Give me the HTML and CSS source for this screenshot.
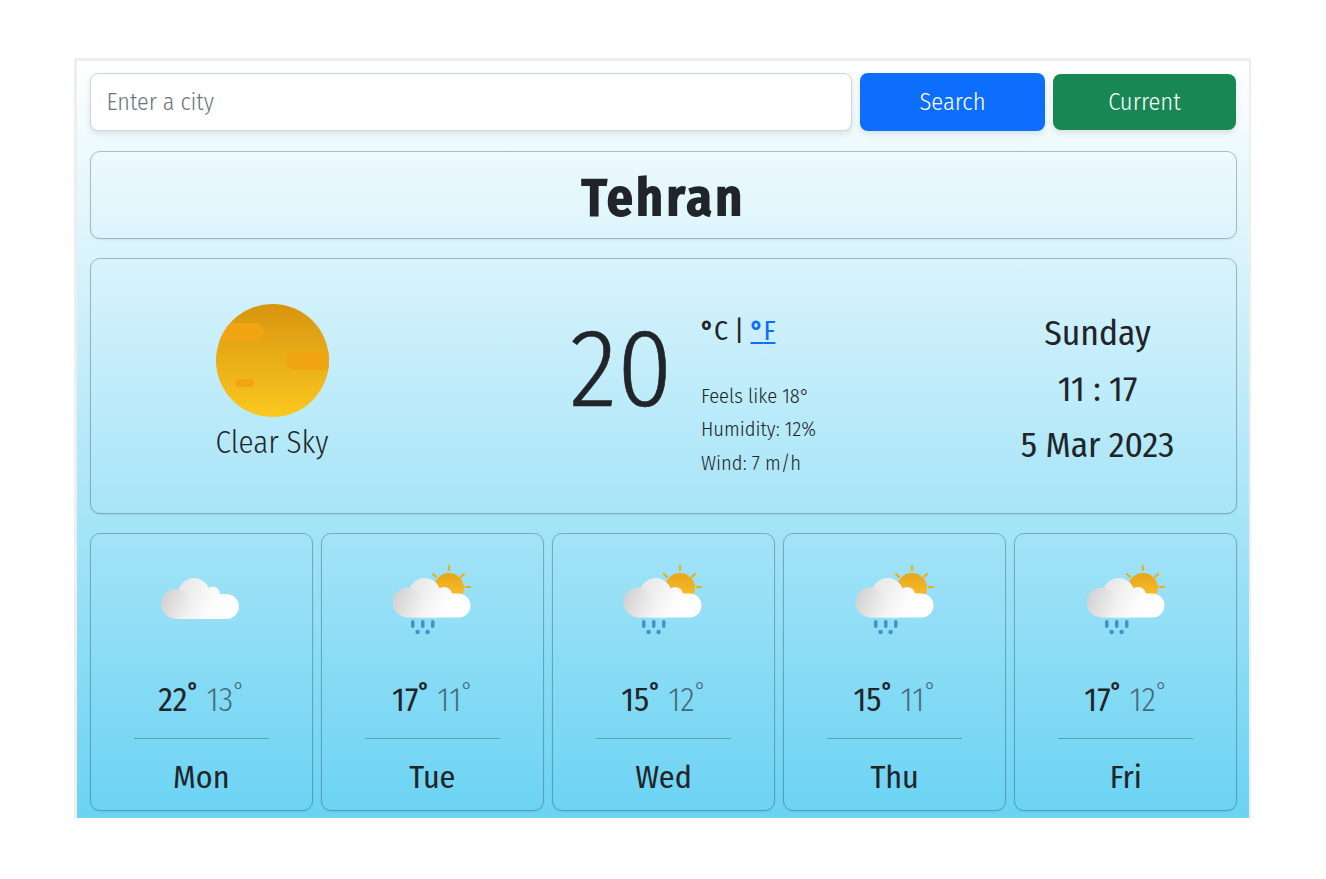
FILE: index.html
```html
<!DOCTYPE html>
<html lang="en">
<head>
<meta charset="utf-8">
<title>Weather</title>
<link rel="stylesheet" href="styles.css">
</head>
<body>
<svg class="defs" width="0" height="0" aria-hidden="true">
  <defs>
    <linearGradient id="cloudA" gradientUnits="userSpaceOnUse" x1="10" y1="20" x2="70" y2="50"><stop offset="0" stop-color="#e2e2e2"/><stop offset="0.7" stop-color="#fdfdfd"/><stop offset="1" stop-color="#ffffff"/></linearGradient>
    <linearGradient id="cloudB" x1="0" y1="0" x2="1" y2="0.4"><stop offset="0" stop-color="#cdcdcd"/><stop offset="1" stop-color="#efefef"/></linearGradient>
    <linearGradient id="sunG" x1="0" y1="0" x2="0" y2="1"><stop offset="0" stop-color="#d8950f"/><stop offset="1" stop-color="#fbc81f"/></linearGradient>
    <linearGradient id="sunS" x1="0" y1="0" x2="0" y2="1"><stop offset="0" stop-color="#e8a51a"/><stop offset="1" stop-color="#fcc431"/></linearGradient>
    <symbol id="cloud" viewBox="0 0 80 76">
      <g fill="url(#cloudA)">
        <circle cx="33" cy="29" r="16"/>
        <circle cx="52" cy="28" r="6.500"/>
        <rect x="15" y="29" width="63" height="25" rx="12.500"/>
        <rect x="15" y="32" width="30" height="22"/>
      </g>
      <circle cx="15" cy="39" r="15" fill="url(#cloudB)"/>
    </symbol>
    <symbol id="rain" viewBox="0 0 80 76">
      <g stroke="#eeae1d" stroke-width="2.200" stroke-linecap="round">
        <path d="M57 1 57 5M41 9 44 12M72 9 69 12M73.500 22 78 22"/>
      </g>
      <circle cx="57" cy="23" r="15" fill="url(#sunS)"/>
      <g fill="url(#cloudA)">
        <circle cx="32.600" cy="29" r="16"/>
        <circle cx="52" cy="30" r="8"/>
        <rect x="15" y="28.500" width="63.500" height="24" rx="12"/>
        <rect x="15" y="32" width="30" height="20.500"/>
      </g>
      <circle cx="15.600" cy="37.500" r="15" fill="url(#cloudB)"/>
      <g fill="#3f93c9">
        <rect x="19" y="55" width="3.500" height="8" rx="1.700"/>
        <rect x="29" y="55" width="3.500" height="8" rx="1.700"/>
        <rect x="39" y="55" width="3.500" height="8" rx="1.700"/>
        <circle cx="25.600" cy="67" r="2.200"/>
        <circle cx="35.600" cy="67" r="2.200"/>
      </g>
    </symbol>
  </defs>
</svg>
<main class="app">
  <form class="search">
    <input class="city" type="text" placeholder="Enter a city">
    <button class="btn btn-search" type="button">Search</button>
    <button class="btn btn-current" type="button">Current</button>
  </form>
  <h1 class="panel title">Tehran</h1>
  <section class="panel now">
    <div class="sky">
      <svg class="sun" viewBox="0 0 113 113" role="img" aria-label="Clear sky">
        <defs><clipPath id="disc"><circle cx="56.500" cy="56.500" r="56.500"/></clipPath></defs>
        <circle cx="56.500" cy="56.500" r="56.500" fill="url(#sunG)"/>
        <g clip-path="url(#disc)" fill="#f2a512">
          <rect x="-4" y="19" width="52" height="18" rx="9"/>
          <rect x="70" y="48" width="60" height="18" rx="9"/>
          <rect x="19" y="75" width="19" height="8" rx="4"/>
        </g>
      </svg>
      <div class="sky-text">Clear Sky</div>
    </div>
    <div class="temp">20</div>
    <div class="facts">
      <div class="units"><b class="deg">°</b>C | <a href="#"><b class="deg">°</b>F</a></div>
      <ul class="list">
        <li>Feels like 18°</li>
        <li>Humidity: 12%</li>
        <li>Wind: 7 m/h</li>
      </ul>
    </div>
    <div class="when">
      <div>Sunday</div>
      <div>11 : 17</div>
      <div>5 Mar 2023</div>
    </div>
  </section>
  <section class="days">
    <article class="panel day">
      <svg class="icon"><use href="#cloud"/></svg>
      <div class="range"><span class="hi">22<sup>°</sup></span> <span class="lo">13<sup>°</sup></span></div>
      <div class="name">Mon</div>
    </article>
    <article class="panel day">
      <svg class="icon"><use href="#rain"/></svg>
      <div class="range"><span class="hi">17<sup>°</sup></span> <span class="lo">11<sup>°</sup></span></div>
      <div class="name">Tue</div>
    </article>
    <article class="panel day">
      <svg class="icon"><use href="#rain"/></svg>
      <div class="range"><span class="hi">15<sup>°</sup></span> <span class="lo">12<sup>°</sup></span></div>
      <div class="name">Wed</div>
    </article>
    <article class="panel day">
      <svg class="icon"><use href="#rain"/></svg>
      <div class="range"><span class="hi">15<sup>°</sup></span> <span class="lo">11<sup>°</sup></span></div>
      <div class="name">Thu</div>
    </article>
    <article class="panel day">
      <svg class="icon"><use href="#rain"/></svg>
      <div class="range"><span class="hi">17<sup>°</sup></span> <span class="lo">12<sup>°</sup></span></div>
      <div class="name">Fri</div>
    </article>
  </section>
</main>
</body>
</html>
```
FILE: styles.css
```css
* { box-sizing: border-box; }
html, body { margin: 0; background: #fff; }
body {
  height: 879px;
  overflow: hidden;
  padding: 58px 0 0 74px;
  font-family: "Fira Sans Condensed", "Roboto Condensed", "Open Sans", sans-serif;
  color: #212529;
}
.defs { position: absolute; }
.app {
  width: 1177px;
  height: 760px;
  padding: 12px 12px 0 13px;
  border: solid #eeeeef;
  border-width: 3px 2px 0 3px;
  background: linear-gradient(180deg, #ffffff 0%, #6bd3f3 100%);
}
.search { display: flex; align-items: center; gap: 8px; height: 58px; margin: 0 0 20px; }
.city {
  flex: 1; height: 58px; padding: 0 15.500px;
  font: inherit; font-size: 24px; font-weight: 300;
  border: 1px solid #ced4da; border-radius: 8px; background: #fff;
  box-shadow: 0 3px 6px rgba(0,0,0,.1);
}
.city::placeholder { color: #6c757d; opacity: 1; }
.btn {
  border: 0; padding: 0 0 2px; color: #fff; font: inherit; font-size: 24.500px; font-weight: 300; border-radius: 8px;
  box-shadow: 0 3px 6px rgba(0,0,0,.1);
}
.btn-search { width: 185px; height: 58px; background: #0d6efd; }
.btn-current { width: 183px; height: 56px; margin-right: 1px; background: #198754; }
.panel { border: 1px solid rgba(0,0,0,.25); border-radius: 10px; box-shadow: 0 1px 2px rgba(0,0,0,.08); }
.title {
  height: 88px; margin: 0 0 19px; padding-top: 4px;
  display: flex; align-items: center; justify-content: center;
  font-weight: 500; font-size: 52px; letter-spacing: 3px;
  -webkit-text-stroke: 2px #212529;
}
.now { height: 256px; margin-bottom: 19px; display: grid; grid-template-columns: 364px 115px 389px 1fr; align-items: start; }
.sky { display: flex; flex-direction: column; align-items: center; padding-top: 45px; margin-left: 114px; width: 134px; }
.sun { width: 113px; height: 113px; flex: none; }
.sky-text { font-size: 31px; line-height: 40px; margin-top: 6px; white-space: nowrap; color: #212529; font-weight: 300; }
.temp { margin-left: 115px; font-size: 110px; line-height: 130px; padding-top: 45px; font-weight: 300; -webkit-text-stroke: .6px #212529; }
.facts { padding-top: 54px; margin-left: 131px; white-space: nowrap; }
.units { font-size: 27.500px; line-height: 36px; }
.deg { font-weight: 700; }
.units a { color: #0d6efd; }
.list { list-style: none; margin: 30.500px 0 0; padding: 0; font-size: 20.500px; line-height: 33.500px; color: #212529; font-weight: 300; }
.when { text-align: center; font-size: 35.500px; line-height: 56px; padding-top: 46px; }
.days { display: grid; grid-template-columns: repeat(5, 1fr); gap: 8.500px; }
.day { height: 278px; display: flex; flex-direction: column; align-items: center; padding-top: 31px; }
.icon { width: 80px; height: 76px; }
.range { font-size: 33px; line-height: 40px; margin-top: 39px; height: 58px; width: 135px; text-align: center; border-bottom: 1px solid rgba(0,0,0,.25); box-sizing: content-box; }
.lo { color: #466a79; font-weight: 300; }
sup { font-size: 24px; line-height: 0; vertical-align: 12px; }
.hi sup { font-weight: 600; }
.name { font-size: 32px; line-height: 40px; margin-top: 18px; }
```
